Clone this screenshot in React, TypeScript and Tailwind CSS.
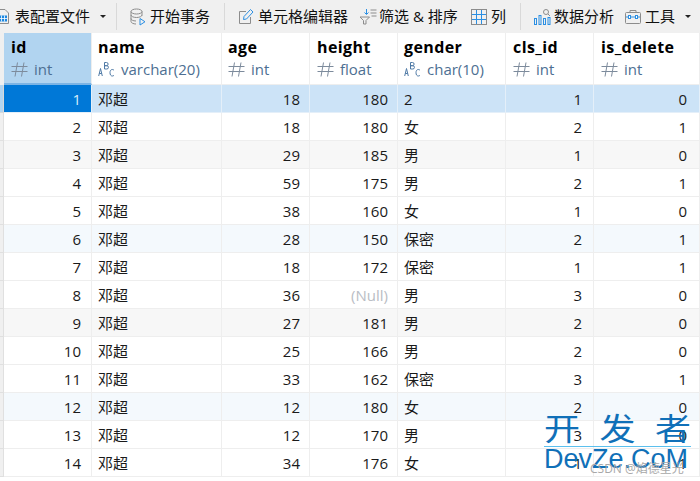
import React from "react";

const font = "font-['Open_Sans','Noto_Sans_CJK_SC',sans-serif]";

const columns = [
  { key: "id", title: "id", type: "int", kind: "num", width: "w-[88px]", pad: "pl-[7px]" },
  { key: "name", title: "name", type: "varchar(20)", kind: "text", width: "w-[130px]", pad: "pl-[6px]" },
  { key: "age", title: "age", type: "int", kind: "num", width: "w-[88px]", pad: "pl-[6px]" },
  { key: "height", title: "height", type: "float", kind: "num", width: "w-[88px]", pad: "pl-[7px]" },
  { key: "gender", title: "gender", type: "char(10)", kind: "text", width: "w-[108px]", pad: "pl-[6px]" },
  { key: "cls_id", title: "cls_id", type: "int", kind: "num", width: "w-[88px]", pad: "pl-[7px]" },
  { key: "is_delete", title: "is_delete", type: "int", kind: "num", width: "w-[106px]", pad: "pl-[7px]" },
];

const rows: [number, number, number | null, string, number, number][] = [
  [1, 18, 180, "2", 1, 0],
  [2, 18, 180, "女", 2, 1],
  [3, 29, 185, "男", 1, 0],
  [4, 59, 175, "男", 2, 1],
  [5, 38, 160, "女", 1, 0],
  [6, 28, 150, "保密", 2, 1],
  [7, 18, 172, "保密", 1, 1],
  [8, 36, null, "男", 3, 0],
  [9, 27, 181, "男", 2, 0],
  [10, 25, 166, "男", 2, 0],
  [11, 33, 162, "保密", 3, 1],
  [12, 12, 180, "女", 2, 0],
  [13, 12, 170, "男", 3, 0],
  [14, 34, 176, "女", 1, 1],
];

function HashIcon() {
  return (
    <svg width="17" height="16" viewBox="0 0 17 16" className="shrink-0" fill="none" stroke="#7d8b9c" strokeWidth="1">
      <path d="M6.500 1.500 4 15.500M13 1.500 10.500 15.500M0.500 5.500h16M0.500 10.500h16" />
    </svg>
  );
}

function AbcIcon() {
  return (
    <svg width="17" height="16" viewBox="0 0 17 16" className="shrink-0" fill="none" stroke="#4f7aa6" strokeWidth="1">
      <path d="M0.700 15 2.500 7.500 4.300 15M1.300 12.500h2.400" />
      <path d="M6.500 1.500v6.500h2.300a1.600 1.600 0 0 0 0-3.300H6.500h2a1.600 1.600 0 0 0 0-3.200H6.500Z" />
      <path d="M16 9.300a2 2 0 0 0-1.700-.8c-1.500 0-2.300 1.300-2.300 3.200s.8 3.300 2.300 3.300a2 2 0 0 0 1.700-.8" />
    </svg>
  );
}

function Caret() {
  return <span className="ml-[10px] h-0 w-0 shrink-0 border-x-[3px] border-t-[3px] border-x-transparent border-t-[#222]" />;
}

function Sep() {
  return <div className="h-[27px] w-px shrink-0 bg-[#d9d9d9]" />;
}

function Toolbar() {
  return (
    <div className="flex h-[33px] items-center bg-[#f0f0f0] text-[15px] leading-none text-[#111]">
      <svg width="10" height="17" viewBox="0 0 10 17" className="shrink-0" fill="none">
        <path d="M-3 1.500h8l3.500 3.500v10.500h-11.500" stroke="#8d8d8d" />
        <rect x="-2" y="7.500" width="9" height="6" fill="#1b87e0" />
        <path d="M-2 10.500h9M1.500 7.500v6M4.500 7.500v6" stroke="#fff" strokeWidth="0.8" />
      </svg>
      <span className="ml-[5px] w-[75px] whitespace-nowrap">表配置文件</span>
      <Caret />
      <div className="ml-[10px]"><Sep /></div>
      <svg width="16" height="18" viewBox="0 0 16 18" className="ml-[13px] shrink-0" fill="none">
        <ellipse cx="6.500" cy="3.500" rx="5.500" ry="2.500" stroke="#8c8c8c" />
        <path d="M1 3.500v10c0 1.400 2.500 2.500 5 2.500M12 3.500v4M1 7c0 1.400 2.500 2.500 5.500 2.500S12 8.400 12 7M1 10.500c0 1.400 2 2.500 5 2.500" stroke="#8c8c8c" />
        <path d="M10 10.500v6.500l5-3.250z" stroke="#2b8fe3" />
      </svg>
      <span className="ml-[4px] w-[60px] whitespace-nowrap">开始事务</span>
      <div className="ml-[14px]"><Sep /></div>
      <svg width="16" height="17" viewBox="0 0 16 17" className="ml-[13px] shrink-0" fill="none">
        <path d="M8 3.500H1.500v12h11V9" stroke="#8c8c8c" />
        <path d="M5.500 11.500 6 8.500 12.500 1.500l2.500 2.500L8.500 11z" stroke="#2b8fe3" />
      </svg>
      <span className="ml-[4px] w-[90px] whitespace-nowrap">单元格编辑器</span>
      <svg width="18" height="17" viewBox="0 0 18 17" className="ml-[11px] shrink-0" fill="none">
        <path d="M1 9h9.500L7 12.500v3.500H4.500v-3.500z" stroke="#8c8c8c" />
        <path d="M7.500 1v5M5.500 4.500l2 2 2-2" stroke="#2b8fe3" />
        <path d="M11.500 2h6M11.500 5h6M12.500 8h5" stroke="#8c8c8c" />
      </svg>
      <span className="ml-[2px] w-[81px] whitespace-nowrap">筛选 &amp; 排序</span>
      <svg width="16" height="16" viewBox="0 0 16 16" className="ml-[11px] shrink-0" fill="none">
        <rect x="0.500" y="0.500" width="15" height="15" stroke="#8c8c8c" />
        <path d="M5.500 1v14M10.500 1v14M1 5.500h14M1 10.500h14" stroke="#2b8fe3" />
      </svg>
      <span className="ml-[4px] w-[15px] whitespace-nowrap">列</span>
      <div className="ml-[14px]"><Sep /></div>
      <svg width="17" height="17" viewBox="0 0 17 17" className="ml-[13px] shrink-0" fill="none">
        <rect x="0.500" y="10.500" width="2" height="6" stroke="#2b8fe3" />
        <rect x="5" y="7.500" width="2" height="9" stroke="#2b8fe3" />
        <rect x="9.500" y="10.500" width="2" height="6" stroke="#2b8fe3" />
        <rect x="14" y="9.500" width="2" height="7" stroke="#2b8fe3" />
        <circle cx="12" cy="4" r="2.500" stroke="#8c8c8c" />
        <path d="m14 6 2 2" stroke="#8c8c8c" />
      </svg>
      <span className="ml-[3px] w-[60px] whitespace-nowrap">数据分析</span>
      <svg width="16" height="15" viewBox="0 0 16 15" className="ml-[11px] shrink-0" fill="none">
        <rect x="0.500" y="3.500" width="15" height="11" rx="1" stroke="#8c8c8c" />
        <path d="M5 3.500V1.500h6v2" stroke="#8c8c8c" />
        <path d="M1 8h14" stroke="#2b8fe3" />
        <rect x="3.500" y="6.500" width="2" height="3" fill="#fff" stroke="#2b8fe3" />
        <rect x="10.500" y="6.500" width="2" height="3" fill="#fff" stroke="#2b8fe3" />
      </svg>
      <span className="ml-[4px] w-[30px] whitespace-nowrap">工具</span>
      <Caret />
    </div>
  );
}

function Header() {
  return (
    <div className="flex h-[52px] bg-white">
      <div className="w-[4px] shrink-0 bg-[#f0f0f0]" />
      {columns.map((c, i) => (
        <div
          key={c.key}
          className={`${c.width} ${c.pad} shrink-0 border-r border-[#eeeeee] ${i === 0 ? "border-b-2 border-b-[#7cb4e4] bg-[#b1d4f0]" : "border-b border-b-[#eeeeee]"}`}
        >
          <div className="mt-[4px] h-[20px] text-[16px] font-bold leading-[20px] tracking-[0.4px] text-black">{c.title}</div>
          <div className="mt-[2px] flex items-center gap-[6px] text-[15px] leading-[20px] text-[#4d6f92]">
            {c.kind === "num" ? <HashIcon /> : <AbcIcon />}
            <span className="whitespace-nowrap">{c.type}</span>
          </div>
        </div>
      ))}
    </div>
  );
}

function Row({ row, index }: { row: (typeof rows)[number]; index: number }) {
  const [id, age, height, gender, cls, del] = row;
  const selected = index === 0;
  let bg = "bg-white";
  if (selected) bg = "bg-[#cce3f7]";
  else if (index % 6 === 2) bg = "bg-[#f7f7f7]";
  else if (index % 6 === 5) bg = "bg-[#f4f9fd]";
  const cell = `h-[28px] shrink-0 border-r border-b px-[6px] leading-[29px] whitespace-nowrap ${selected ? "border-[#e4eff9]" : "border-[#eeeeee]"}`;

  return (
    <div className={`flex text-[15px] text-[#1a1a1a] ${bg}`}>
      <div className={`h-[28px] w-[4px] shrink-0 border-r border-b ${selected ? "border-[#d8d8d8] bg-[#b1d4f0]" : "border-[#e0e0e0] bg-[#f0f0f0]"}`} />
      <div className={`${cell} w-[88px] text-right pr-[10px] ${selected ? "bg-[#0078d7] text-[#d9ebfa]" : ""}`}>{id}</div>
      <div className={`${cell} w-[130px]`}>邓超</div>
      <div className={`${cell} w-[88px] text-right pr-[9px]`}>{age}</div>
      <div className={`${cell} w-[88px] text-right pr-[9px] ${height === null ? "text-[#b9bdc4]" : ""}`}>
        {height === null ? "(Null)" : height}
      </div>
      <div className={`${cell} w-[108px]`}>{gender}</div>
      <div className={`${cell} w-[88px] text-right pr-[11px]`}>{cls}</div>
      <div className={`${cell} w-[106px] text-right pr-[12px]`}>{del}</div>
    </div>
  );
}

export default function App() {
  return (
    <div className={`relative h-[481px] w-[700px] overflow-hidden bg-white ${font}`}>
      <Toolbar />
      <Header />
      {rows.map((r, i) => (
        <Row key={r[0]} row={r} index={i} />
      ))}

      {/* watermark */}
      <div className="absolute left-[544px] top-[414px] w-[147px] text-[#1070b8]">
        <div className="flex h-[32px] origin-top scale-y-[0.85] justify-between text-[36px] leading-[36px]">
          <span>开</span>
          <span>发</span>
          <span>者</span>
        </div>
        <div className="h-px bg-[#5cc0ee]" />
        <div className="font-['Liberation_Sans',sans-serif] text-[27px] leading-[25px] whitespace-nowrap">DevZe.CoM</div>
      </div>
      <div className="absolute left-[590px] top-[461px] text-[12px] leading-[16px] whitespace-nowrap text-[#a8a8a8]">
        CSDN @焰德星光
      </div>
    </div>
  );
}
